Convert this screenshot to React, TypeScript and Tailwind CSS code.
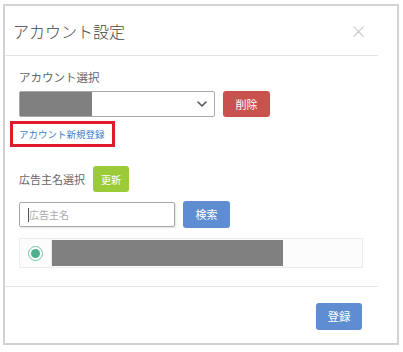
import React from "react";

const jp = { fontFamily: '"Noto Sans CJK JP", "Noto Sans", sans-serif' };

const Chevron = () => (
  <svg width="10" height="6" viewBox="0 0 10 6" fill="none">
    <path d="M1 1l4 4 4-4" stroke="#555" strokeWidth="1.6" strokeLinecap="round" strokeLinejoin="round" />
  </svg>
);

const App = () => {
  return (
    <div className="w-[403px] h-[352px] bg-white pt-[4px] pl-[3px]" style={jp}>
      <div className="w-[396px] h-[341px] border-2 border-[#d2d2d2] bg-white">
        <div className="w-[373px]">
          {/* header */}
          <div className="h-[50px] flex items-center justify-between pl-[8px] pr-[11px] border-b border-[#e5e5e5]">
            <span className="text-[16px] text-[#444] font-light">アカウント設定</span>
            <span className="text-[17px] leading-none text-[#bdbdbd] font-light">×</span>
          </div>

          {/* body */}
          <div className="pt-[12px] pl-[14px] pb-[18px]">
            <div className="h-[18px] leading-[18px] text-[11.5px] text-[#666]">アカウント選択</div>
            <div className="mt-[5px] flex items-center gap-[8px]">
              <div className="w-[196px] h-[26px] border border-[#aaa] rounded-[2px] flex items-center justify-between pr-[7px]">
                <div className="w-[72px] h-[24px] bg-[#808080]" />
                <Chevron />
              </div>
              <button className="w-[47px] h-[26px] rounded-[3px] bg-[#c9524f] text-white text-[11px]">削除</button>
            </div>
            <div className="mt-[4px] -ml-[9px] w-[105px] h-[26px] border-[3px] border-[#e11a2b] flex items-center pl-[6px]">
              <span className="text-[9.5px] text-[#3d7cc9] whitespace-nowrap">アカウント新規登録</span>
            </div>

            <div className="mt-[19px] h-[26px] flex items-center gap-[8px]">
              <span className="text-[11px] text-[#666]">広告主名選択</span>
              <button className="w-[36px] h-[26px] rounded-[3px] bg-[#9ccb3a] text-white text-[10px]">更新</button>
            </div>

            <div className="mt-[9px] flex items-center gap-[8px]">
              <div className="w-[156px] h-[25px] border border-[#a8a8a8] rounded-[2px] shadow-[1px_1px_2px_rgba(0,0,0,0.12)] flex items-center pl-[8px]">
                <span className="w-px h-[14px] bg-[#555]" />
                <span className="text-[10px] text-[#aaa]">広告主名</span>
              </div>
              <button className="w-[47px] h-[27px] rounded-[3px] bg-[#5e8dd1] text-white text-[11px]">検索</button>
            </div>

            <div className="mt-[10px] w-[344px] h-[30px] border border-[#ececec] bg-[#fcfcfc] flex">
              <div className="w-[32px] h-full border-r border-[#ececec] flex items-center justify-center">
                <div className="w-[15px] h-[15px] rounded-full border-[1.5px] border-[#72c2a6] flex items-center justify-center bg-white">
                  <div className="w-[9px] h-[9px] rounded-full bg-[#4daf8d]" />
                </div>
              </div>
              <div className="my-[1px] w-[231px] bg-[#808080]" />
            </div>
          </div>

          {/* footer */}
          <div className="border-t border-[#e5e5e5] pt-[16px] pr-[16px] flex justify-end">
            <button className="w-[46px] h-[27px] rounded-[3px] bg-[#5e8dd1] text-white text-[11.5px]">登録</button>
          </div>
        </div>
      </div>
    </div>
  );
};

export default App;
